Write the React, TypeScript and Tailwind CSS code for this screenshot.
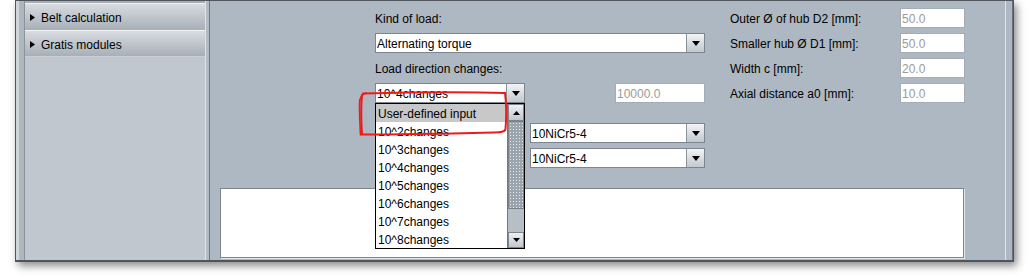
import React from "react";

function DownTri({ w = 8, h = 5 }: { w?: number; h?: number }) {
  return (
    <svg width={w} height={h} viewBox={`0 0 ${w} ${h}`}>
      <path d={`M0 0H${w}L${w / 2} ${h}Z`} fill="#000" />
    </svg>
  );
}

function UpTri({ w = 8, h = 5 }: { w?: number; h?: number }) {
  return (
    <svg width={w} height={h} viewBox={`0 0 ${w} ${h}`}>
      <path d={`M0 ${h}H${w}L${w / 2} 0Z`} fill="#000" />
    </svg>
  );
}

function Combo({ text, className }: { text: string; className: string }) {
  return (
    <div className={`flex h-[20px] border border-[#7d868f] bg-white ${className}`}>
      <div className="flex-1 overflow-hidden whitespace-nowrap pl-[1px] text-[12px] leading-[20px] text-black">
        {text}
      </div>
      <div className="flex w-[18px] items-center justify-center border-l border-[#8b949c] bg-gradient-to-b from-[#f3f5f7] to-[#c2c8ce]">
        <DownTri />
      </div>
    </div>
  );
}

function Field({ text, className }: { text: string; className: string }) {
  return (
    <div
      className={`h-[20px] border border-[#a4acb4] bg-white pl-[1px] text-[12px] leading-[20px] text-[#9b9b9b] ${className}`}
    >
      {text}
    </div>
  );
}

function SideRow({ label, h }: { label: string; h: string }) {
  return (
    <div
      className={`flex ${h} items-center gap-[6px] bg-gradient-to-b from-[#d8dce1] to-[#a8afb7] pl-[5px] pt-[2px] text-[12px] text-black`}
    >
      <svg width="5" height="7" viewBox="0 0 5 7" className="mb-[1px]">
        <path d="M0 0L5 3.5L0 7Z" fill="#000" />
      </svg>
      <span>{label}</span>
    </div>
  );
}

const rightRows = [
  ["Outer Ø of hub D2 [mm]:", "50.0"],
  ["Smaller hub Ø D1 [mm]:", "50.0"],
  ["Width c [mm]:", "20.0"],
  ["Axial distance a0 [mm]:", "10.0"],
];

const listItems = [
  "User-defined input",
  "10^2changes",
  "10^3changes",
  "10^4changes",
  "10^5changes",
  "10^6changes",
  "10^7changes",
  "10^8changes",
];

export default function App() {
  return (
    <div className="relative h-[278px] w-[1030px] overflow-hidden bg-white font-['Liberation_Sans',Arial,sans-serif] text-[12px] text-black">
      {/* window */}
      <div className="ml-[15px] flex h-[262px] w-[999px] border border-b-2 border-[#4f555b] shadow-[3px_4px_8px_rgba(0,0,0,0.45)]">
        <div className="w-[3px] bg-[#d0d5da]" />
        <div className="w-[5px] bg-[#aeb6be]" />
        {/* sidebar */}
        <div className="flex w-[181px] flex-col border-l border-[#8a929a] bg-[#c1c7ce]">
          <div className="h-[2px] bg-[#a6adb5]" />
          <div className="h-[1px] bg-[#eef1f3]" />
          <SideRow label="Belt calculation" h="h-[26px]" />
          <div className="h-[1px] bg-[#f2f4f6]" />
          <SideRow label="Gratis modules" h="h-[25px]" />
          <div className="h-[1px] bg-[#c9ced4]" />
        </div>
        <div className="w-[1px] bg-[#dfe3e7]" />
        <div className="w-[3px] bg-[#b3bbc3]" />
        <div className="w-[1px] bg-[#6e767e]" />
        {/* main panel */}
        <div className="flex w-[795px] flex-col bg-[#aeb8c2]">
          <div className="flex pt-[7px]">
            {/* column A */}
            <div className="ml-[165px] flex w-[330px] flex-col">
              <div className="h-[20px] pt-[1px] leading-[20px]">Kind of load:</div>
              <Combo text="Alternating torque" className="mt-[5px] w-[330px]" />
              <div className="mt-[5px] h-[20px] pt-[1px] leading-[20px]">Load direction changes:</div>
              <div className="mt-[5px] flex">
                <Combo text="10^4changes" className="w-[150px]" />
                <Field text="10000.0" className="ml-[90px] w-[90px]" />
              </div>
              <Combo text="10NiCr5-4" className="ml-[155px] mt-[20px] w-[175px]" />
              <Combo text="10NiCr5-4" className="ml-[155px] mt-[5px] w-[175px]" />
            </div>
            {/* column B */}
            <div className="ml-[25px] flex flex-col gap-[5px]">
              {rightRows.map(([l, v]) => (
                <div key={l} className="flex h-[20px] items-center">
                  <div className="w-[170px] whitespace-nowrap pt-[2px]">{l}</div>
                  <Field text={v} className="w-[65px]" />
                </div>
              ))}
            </div>
          </div>
          <div className="ml-[10px] mt-[20px] h-[70px] w-[744px] border border-[#7b858f] bg-white shadow-[1px_1px_0_#e3e7eb]" />
        </div>
        <div className="w-[1px] bg-[#dfe4e9]" />
        <div className="w-[6px] bg-[#aeb8c2]" />
        <div className="w-[1px] bg-[#6a7178]" />
      </div>

      {/* dropdown popup */}
      <div className="absolute left-[375px] top-[103px] flex h-[146px] w-[150px] border border-black bg-white">
        <div className="flex flex-1 flex-col">
          {listItems.map((it, i) => (
            <div
              key={it}
              className={`h-[18px] whitespace-nowrap pl-[2px] leading-[20px] ${i === 0 ? "bg-[#c8c8c8]" : "bg-white"}`}
            >
              {it}
            </div>
          ))}
        </div>
        <div className="flex w-[17px] flex-col border-l border-[#6f777f] bg-[#b6bec6]">
          <div className="flex h-[17px] items-center justify-center border border-[#7d858d] bg-gradient-to-b from-[#eef1f4] to-[#c0c7ce]">
            <UpTri w={7} h={4} />
          </div>
          <div className="h-[88px] border border-[#7a828a] bg-[#9ca5ae] bg-[radial-gradient(circle,#e8ebee_0.7px,transparent_0.9px)] bg-[length:3px_3px]" />
          <div className="h-[23px]" />
          <div className="flex h-[16px] items-center justify-center border border-[#7d858d] bg-gradient-to-b from-[#eef1f4] to-[#c0c7ce]">
            <DownTri w={7} h={4} />
          </div>
        </div>
      </div>

      {/* red annotation */}
      <svg
        className="pointer-events-none absolute left-[350px] top-[84px]"
        width="170"
        height="58"
        viewBox="350 84 170 58"
      >
        <path
          d="M363 93.5 C 400 92.5, 460 91.5, 505 93 C 506.5 105, 506.5 118, 505.5 129 C 505 132, 501 132.5, 494 132.5 C 450 133.5, 405 134.5, 362 134.5 C 361 120, 361 106, 362 95"
          fill="none"
          stroke="#f01a1a"
          strokeWidth="2"
          strokeLinecap="round"
        />
        <path
          d="M366 93 C 362 94, 359.5 97, 359.5 104 C 359.5 115, 360 126, 360.5 135"
          fill="none"
          stroke="#f01a1a"
          strokeWidth="1.6"
          strokeLinecap="round"
        />
      </svg>
    </div>
  );
}
